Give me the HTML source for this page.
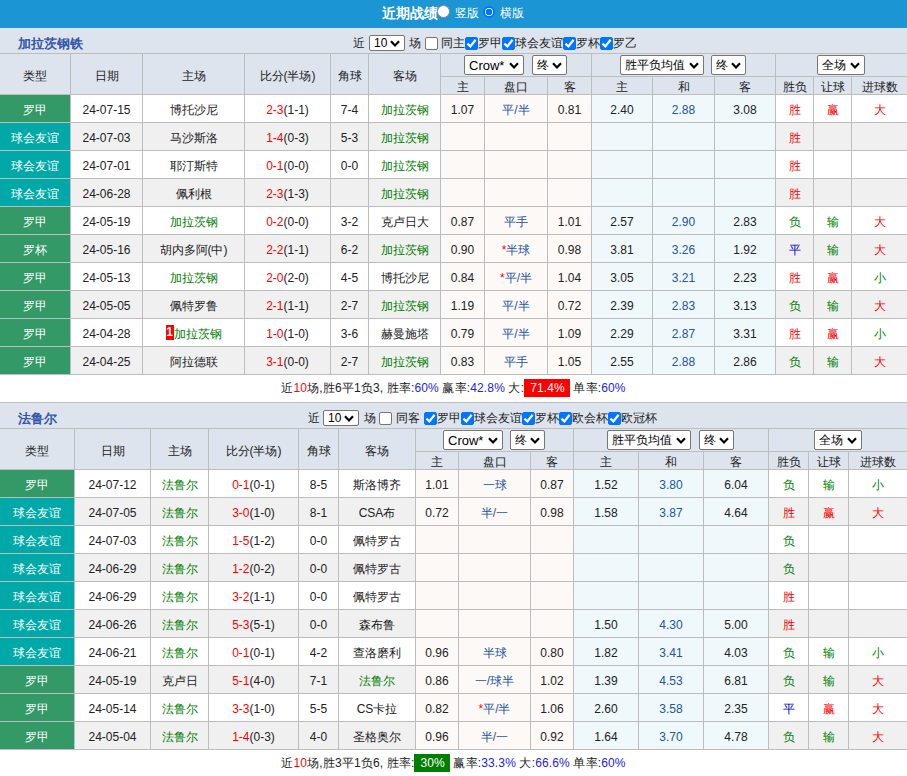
<!DOCTYPE html><html><head><meta charset="utf-8"><style>
*{margin:0;padding:0;box-sizing:border-box}
html,body{width:907px;height:776px;overflow:hidden;background:#fff}
body{position:relative;font-family:"Liberation Sans",sans-serif;font-size:12px;color:#222}
body>div{position:absolute;white-space:nowrap}
.sel{background:#fff;border:1px solid #767676;border-radius:2px;color:#000}
.sel span{position:absolute;left:4px;top:0;bottom:0;display:flex;align-items:center;font-size:13px}
.cb{position:absolute;width:13px;height:13px;border:1px solid #767676;border-radius:2px;background:#fff}
.cb.on{background:#0075ff;border-color:#0075ff}
.cb svg{position:absolute;left:-1px;top:-1px}
.rd{position:absolute;width:13px;height:13px;border-radius:50%;background:#fff;border:1px solid #888}
.rd.on{background:radial-gradient(circle,#0075ff 0,#0075ff 3px,#fff 3.6px);border:2px solid #0075ff;width:12px;height:12px}
.rk{display:inline-block;background:#f00;color:#fff;font-weight:bold;width:8px;height:15px;line-height:15px;text-align:center;vertical-align:2px;font-size:12px}
</style></head><body><div style="left:0px;top:0px;width:907px;height:28px;background:#1b95d3"></div><div style="left:0px;top:28px;width:907px;height:25px;background:#dde4ed"></div><div style="left:18px;top:31px;height:25px;line-height:25px;font-size:13px;font-weight:bold;color:#3456a8">加拉茨钢铁</div><div style="left:353px;top:36px;line-height:15px;height:15px;">近</div><div class="sel" style="left:369px;top:35px;width:36px;height:16px"><span style="font-size:12px;left:4px;font-family:"Liberation Mono",monospace">10</span><svg width="10" height="7" viewBox="0 0 10 7" style="position:absolute;right:4px;top:4px"><path d="M1 1.2 L5 5.4 L9 1.2" stroke="#000" stroke-width="2.2" fill="none"/></svg></div><div style="left:409px;top:36px;line-height:15px;height:15px;">场</div><div class="cb" style="left:425px;top:37px"></div><div style="left:441px;top:36px;line-height:15px;height:15px;">同主</div><div class="cb on" style="left:465px;top:37px"><svg width="13" height="13" viewBox="0 0 13 13"><path d="M2.4 6.6 L5.4 9.4 L10.6 2.8" stroke="#fff" stroke-width="2.2" fill="none"/></svg></div><div style="left:478px;top:36px;line-height:15px;height:15px;">罗甲</div><div class="cb on" style="left:502px;top:37px"><svg width="13" height="13" viewBox="0 0 13 13"><path d="M2.4 6.6 L5.4 9.4 L10.6 2.8" stroke="#fff" stroke-width="2.2" fill="none"/></svg></div><div style="left:515px;top:36px;line-height:15px;height:15px;">球会友谊</div><div class="cb on" style="left:563px;top:37px"><svg width="13" height="13" viewBox="0 0 13 13"><path d="M2.4 6.6 L5.4 9.4 L10.6 2.8" stroke="#fff" stroke-width="2.2" fill="none"/></svg></div><div style="left:576px;top:36px;line-height:15px;height:15px;">罗杯</div><div class="cb on" style="left:600px;top:37px"><svg width="13" height="13" viewBox="0 0 13 13"><path d="M2.4 6.6 L5.4 9.4 L10.6 2.8" stroke="#fff" stroke-width="2.2" fill="none"/></svg></div><div style="left:613px;top:36px;line-height:15px;height:15px;">罗乙</div><div style="left:0px;top:53px;width:907px;height:1px;background:#bdbdbd"></div><div style="left:0px;top:54px;width:907px;height:40px;background:#dde4ed"></div><div style="left:0px;top:94px;width:907px;height:1px;background:#bdbdbd"></div><div style="left:0px;top:54px;width:70px;height:40px;line-height:40px;text-align:center;padding-top:2px;">类型</div><div style="left:71px;top:54px;width:71px;height:40px;line-height:40px;text-align:center;padding-top:2px;">日期</div><div style="left:143px;top:54px;width:101px;height:40px;line-height:40px;text-align:center;padding-top:2px;">主场</div><div style="left:245px;top:54px;width:85px;height:40px;line-height:40px;text-align:center;padding-top:2px;">比分(半场)</div><div style="left:331px;top:54px;width:37px;height:40px;line-height:40px;text-align:center;padding-top:2px;">角球</div><div style="left:369px;top:54px;width:71px;height:40px;line-height:40px;text-align:center;padding-top:2px;">客场</div><div style="left:440px;top:76px;width:467px;height:1px;background:#bdbdbd"></div><div style="left:441px;top:77px;width:43px;height:17px;line-height:17px;text-align:center;padding-top:2px;line-height:17px">主</div><div style="left:485px;top:77px;width:62px;height:17px;line-height:17px;text-align:center;padding-top:2px;line-height:17px">盘口</div><div style="left:548px;top:77px;width:43px;height:17px;line-height:17px;text-align:center;padding-top:2px;line-height:17px">客</div><div style="left:592px;top:77px;width:60px;height:17px;line-height:17px;text-align:center;padding-top:2px;line-height:17px">主</div><div style="left:653px;top:77px;width:61px;height:17px;line-height:17px;text-align:center;padding-top:2px;line-height:17px">和</div><div style="left:715px;top:77px;width:60px;height:17px;line-height:17px;text-align:center;padding-top:2px;line-height:17px">客</div><div style="left:776px;top:77px;width:37px;height:17px;line-height:17px;text-align:center;padding-top:2px;line-height:17px">胜负</div><div style="left:814px;top:77px;width:37px;height:17px;line-height:17px;text-align:center;padding-top:2px;line-height:17px">让球</div><div style="left:852px;top:77px;width:55px;height:17px;line-height:17px;text-align:center;padding-top:2px;line-height:17px">进球数</div><div class="sel" style="left:464px;top:55px;width:60px;height:20px"><span style="font-size:13px;left:4px;">Crow*</span><svg width="10" height="7" viewBox="0 0 10 7" style="position:absolute;right:4px;top:6px"><path d="M1 1.2 L5 5.4 L9 1.2" stroke="#000" stroke-width="2.2" fill="none"/></svg></div><div class="sel" style="left:532px;top:55px;width:35px;height:20px"><span style="font-size:12px;left:4px;">终</span><svg width="10" height="7" viewBox="0 0 10 7" style="position:absolute;right:4px;top:6px"><path d="M1 1.2 L5 5.4 L9 1.2" stroke="#000" stroke-width="2.2" fill="none"/></svg></div><div class="sel" style="left:620px;top:55px;width:84px;height:20px"><span style="font-size:12px;left:4px;">胜平负均值</span><svg width="10" height="7" viewBox="0 0 10 7" style="position:absolute;right:4px;top:6px"><path d="M1 1.2 L5 5.4 L9 1.2" stroke="#000" stroke-width="2.2" fill="none"/></svg></div><div class="sel" style="left:711px;top:55px;width:35px;height:20px"><span style="font-size:12px;left:4px;">终</span><svg width="10" height="7" viewBox="0 0 10 7" style="position:absolute;right:4px;top:6px"><path d="M1 1.2 L5 5.4 L9 1.2" stroke="#000" stroke-width="2.2" fill="none"/></svg></div><div class="sel" style="left:817px;top:55px;width:48px;height:20px"><span style="font-size:12px;left:4px;">全场</span><svg width="10" height="7" viewBox="0 0 10 7" style="position:absolute;right:4px;top:6px"><path d="M1 1.2 L5 5.4 L9 1.2" stroke="#000" stroke-width="2.2" fill="none"/></svg></div><div style="left:0px;top:95px;width:907px;height:27px;background:#fff"></div><div style="left:0px;top:95px;width:70px;height:27px;background:#339966"></div><div style="left:441px;top:95px;width:150px;height:27px;background:#fdf9f6"></div><div style="left:592px;top:95px;width:183px;height:27px;background:#eff8fb"></div><div style="left:0px;top:95px;width:70px;height:27px;line-height:27px;text-align:center;padding-top:2px;color:#fff">罗甲</div><div style="left:71px;top:95px;width:71px;height:27px;line-height:27px;text-align:center;padding-top:2px;">24-07-15</div><div style="left:143px;top:95px;width:101px;height:27px;line-height:27px;text-align:center;padding-top:2px;">博托沙尼</div><div style="left:245px;top:95px;width:85px;height:27px;line-height:27px;text-align:center;padding-top:2px;"><span style="color:#ff0000">2-3</span>(1-1)</div><div style="left:331px;top:95px;width:37px;height:27px;line-height:27px;text-align:center;padding-top:2px;">7-4</div><div style="left:369px;top:95px;width:71px;height:27px;line-height:27px;text-align:center;padding-top:2px;color:#008000">加拉茨钢</div><div style="left:441px;top:95px;width:43px;height:27px;line-height:27px;text-align:center;padding-top:2px;">1.07</div><div style="left:485px;top:95px;width:62px;height:27px;line-height:27px;text-align:center;padding-top:2px;color:#2255a4">平/半</div><div style="left:548px;top:95px;width:43px;height:27px;line-height:27px;text-align:center;padding-top:2px;">0.81</div><div style="left:592px;top:95px;width:60px;height:27px;line-height:27px;text-align:center;padding-top:2px;">2.40</div><div style="left:653px;top:95px;width:61px;height:27px;line-height:27px;text-align:center;padding-top:2px;color:#2255a4">2.88</div><div style="left:715px;top:95px;width:60px;height:27px;line-height:27px;text-align:center;padding-top:2px;">3.08</div><div style="left:776px;top:95px;width:37px;height:27px;line-height:27px;text-align:center;padding-top:2px;color:#ff0000">胜</div><div style="left:814px;top:95px;width:37px;height:27px;line-height:27px;text-align:center;padding-top:2px;color:#ff0000">赢</div><div style="left:852px;top:95px;width:55px;height:27px;line-height:27px;text-align:center;padding-top:2px;color:#ff0000">大</div><div style="left:0px;top:122px;width:907px;height:1px;background:#bdbdbd"></div><div style="left:0px;top:123px;width:907px;height:27px;background:#f0f0f0"></div><div style="left:0px;top:123px;width:70px;height:27px;background:#00a8a8"></div><div style="left:441px;top:123px;width:150px;height:27px;background:#fdf9f6"></div><div style="left:592px;top:123px;width:183px;height:27px;background:#eff8fb"></div><div style="left:0px;top:123px;width:70px;height:27px;line-height:27px;text-align:center;padding-top:2px;color:#fff">球会友谊</div><div style="left:71px;top:123px;width:71px;height:27px;line-height:27px;text-align:center;padding-top:2px;">24-07-03</div><div style="left:143px;top:123px;width:101px;height:27px;line-height:27px;text-align:center;padding-top:2px;">马沙斯洛</div><div style="left:245px;top:123px;width:85px;height:27px;line-height:27px;text-align:center;padding-top:2px;"><span style="color:#ff0000">1-4</span>(0-3)</div><div style="left:331px;top:123px;width:37px;height:27px;line-height:27px;text-align:center;padding-top:2px;">5-3</div><div style="left:369px;top:123px;width:71px;height:27px;line-height:27px;text-align:center;padding-top:2px;color:#008000">加拉茨钢</div><div style="left:776px;top:123px;width:37px;height:27px;line-height:27px;text-align:center;padding-top:2px;color:#ff0000">胜</div><div style="left:0px;top:150px;width:907px;height:1px;background:#bdbdbd"></div><div style="left:0px;top:151px;width:907px;height:27px;background:#fff"></div><div style="left:0px;top:151px;width:70px;height:27px;background:#00a8a8"></div><div style="left:441px;top:151px;width:150px;height:27px;background:#fdf9f6"></div><div style="left:592px;top:151px;width:183px;height:27px;background:#eff8fb"></div><div style="left:0px;top:151px;width:70px;height:27px;line-height:27px;text-align:center;padding-top:2px;color:#fff">球会友谊</div><div style="left:71px;top:151px;width:71px;height:27px;line-height:27px;text-align:center;padding-top:2px;">24-07-01</div><div style="left:143px;top:151px;width:101px;height:27px;line-height:27px;text-align:center;padding-top:2px;">耶汀斯特</div><div style="left:245px;top:151px;width:85px;height:27px;line-height:27px;text-align:center;padding-top:2px;"><span style="color:#ff0000">0-1</span>(0-0)</div><div style="left:331px;top:151px;width:37px;height:27px;line-height:27px;text-align:center;padding-top:2px;">0-0</div><div style="left:369px;top:151px;width:71px;height:27px;line-height:27px;text-align:center;padding-top:2px;color:#008000">加拉茨钢</div><div style="left:776px;top:151px;width:37px;height:27px;line-height:27px;text-align:center;padding-top:2px;color:#ff0000">胜</div><div style="left:0px;top:178px;width:907px;height:1px;background:#bdbdbd"></div><div style="left:0px;top:179px;width:907px;height:27px;background:#f0f0f0"></div><div style="left:0px;top:179px;width:70px;height:27px;background:#00a8a8"></div><div style="left:441px;top:179px;width:150px;height:27px;background:#fdf9f6"></div><div style="left:592px;top:179px;width:183px;height:27px;background:#eff8fb"></div><div style="left:0px;top:179px;width:70px;height:27px;line-height:27px;text-align:center;padding-top:2px;color:#fff">球会友谊</div><div style="left:71px;top:179px;width:71px;height:27px;line-height:27px;text-align:center;padding-top:2px;">24-06-28</div><div style="left:143px;top:179px;width:101px;height:27px;line-height:27px;text-align:center;padding-top:2px;">佩利根</div><div style="left:245px;top:179px;width:85px;height:27px;line-height:27px;text-align:center;padding-top:2px;"><span style="color:#ff0000">2-3</span>(1-3)</div><div style="left:369px;top:179px;width:71px;height:27px;line-height:27px;text-align:center;padding-top:2px;color:#008000">加拉茨钢</div><div style="left:776px;top:179px;width:37px;height:27px;line-height:27px;text-align:center;padding-top:2px;color:#ff0000">胜</div><div style="left:0px;top:206px;width:907px;height:1px;background:#bdbdbd"></div><div style="left:0px;top:207px;width:907px;height:27px;background:#fff"></div><div style="left:0px;top:207px;width:70px;height:27px;background:#339966"></div><div style="left:441px;top:207px;width:150px;height:27px;background:#fdf9f6"></div><div style="left:592px;top:207px;width:183px;height:27px;background:#eff8fb"></div><div style="left:0px;top:207px;width:70px;height:27px;line-height:27px;text-align:center;padding-top:2px;color:#fff">罗甲</div><div style="left:71px;top:207px;width:71px;height:27px;line-height:27px;text-align:center;padding-top:2px;">24-05-19</div><div style="left:143px;top:207px;width:101px;height:27px;line-height:27px;text-align:center;padding-top:2px;color:#008000">加拉茨钢</div><div style="left:245px;top:207px;width:85px;height:27px;line-height:27px;text-align:center;padding-top:2px;"><span style="color:#ff0000">0-2</span>(0-0)</div><div style="left:331px;top:207px;width:37px;height:27px;line-height:27px;text-align:center;padding-top:2px;">3-2</div><div style="left:369px;top:207px;width:71px;height:27px;line-height:27px;text-align:center;padding-top:2px;">克卢日大</div><div style="left:441px;top:207px;width:43px;height:27px;line-height:27px;text-align:center;padding-top:2px;">0.87</div><div style="left:485px;top:207px;width:62px;height:27px;line-height:27px;text-align:center;padding-top:2px;color:#2255a4">平手</div><div style="left:548px;top:207px;width:43px;height:27px;line-height:27px;text-align:center;padding-top:2px;">1.01</div><div style="left:592px;top:207px;width:60px;height:27px;line-height:27px;text-align:center;padding-top:2px;">2.57</div><div style="left:653px;top:207px;width:61px;height:27px;line-height:27px;text-align:center;padding-top:2px;color:#2255a4">2.90</div><div style="left:715px;top:207px;width:60px;height:27px;line-height:27px;text-align:center;padding-top:2px;">2.83</div><div style="left:776px;top:207px;width:37px;height:27px;line-height:27px;text-align:center;padding-top:2px;color:#008000">负</div><div style="left:814px;top:207px;width:37px;height:27px;line-height:27px;text-align:center;padding-top:2px;color:#008000">输</div><div style="left:852px;top:207px;width:55px;height:27px;line-height:27px;text-align:center;padding-top:2px;color:#ff0000">大</div><div style="left:0px;top:234px;width:907px;height:1px;background:#bdbdbd"></div><div style="left:0px;top:235px;width:907px;height:27px;background:#f0f0f0"></div><div style="left:0px;top:235px;width:70px;height:27px;background:#339966"></div><div style="left:441px;top:235px;width:150px;height:27px;background:#fdf9f6"></div><div style="left:592px;top:235px;width:183px;height:27px;background:#eff8fb"></div><div style="left:0px;top:235px;width:70px;height:27px;line-height:27px;text-align:center;padding-top:2px;color:#fff">罗杯</div><div style="left:71px;top:235px;width:71px;height:27px;line-height:27px;text-align:center;padding-top:2px;">24-05-16</div><div style="left:143px;top:235px;width:101px;height:27px;line-height:27px;text-align:center;padding-top:2px;">胡内多阿(中)</div><div style="left:245px;top:235px;width:85px;height:27px;line-height:27px;text-align:center;padding-top:2px;"><span style="color:#ff0000">2-2</span>(1-1)</div><div style="left:331px;top:235px;width:37px;height:27px;line-height:27px;text-align:center;padding-top:2px;">6-2</div><div style="left:369px;top:235px;width:71px;height:27px;line-height:27px;text-align:center;padding-top:2px;color:#008000">加拉茨钢</div><div style="left:441px;top:235px;width:43px;height:27px;line-height:27px;text-align:center;padding-top:2px;">0.90</div><div style="left:485px;top:235px;width:62px;height:27px;line-height:27px;text-align:center;padding-top:2px;color:#2255a4"><span style="color:#ff0000">*</span>半球</div><div style="left:548px;top:235px;width:43px;height:27px;line-height:27px;text-align:center;padding-top:2px;">0.98</div><div style="left:592px;top:235px;width:60px;height:27px;line-height:27px;text-align:center;padding-top:2px;">3.81</div><div style="left:653px;top:235px;width:61px;height:27px;line-height:27px;text-align:center;padding-top:2px;color:#2255a4">3.26</div><div style="left:715px;top:235px;width:60px;height:27px;line-height:27px;text-align:center;padding-top:2px;">1.92</div><div style="left:776px;top:235px;width:37px;height:27px;line-height:27px;text-align:center;padding-top:2px;color:#0000cc">平</div><div style="left:814px;top:235px;width:37px;height:27px;line-height:27px;text-align:center;padding-top:2px;color:#008000">输</div><div style="left:852px;top:235px;width:55px;height:27px;line-height:27px;text-align:center;padding-top:2px;color:#ff0000">大</div><div style="left:0px;top:262px;width:907px;height:1px;background:#bdbdbd"></div><div style="left:0px;top:263px;width:907px;height:27px;background:#fff"></div><div style="left:0px;top:263px;width:70px;height:27px;background:#339966"></div><div style="left:441px;top:263px;width:150px;height:27px;background:#fdf9f6"></div><div style="left:592px;top:263px;width:183px;height:27px;background:#eff8fb"></div><div style="left:0px;top:263px;width:70px;height:27px;line-height:27px;text-align:center;padding-top:2px;color:#fff">罗甲</div><div style="left:71px;top:263px;width:71px;height:27px;line-height:27px;text-align:center;padding-top:2px;">24-05-13</div><div style="left:143px;top:263px;width:101px;height:27px;line-height:27px;text-align:center;padding-top:2px;color:#008000">加拉茨钢</div><div style="left:245px;top:263px;width:85px;height:27px;line-height:27px;text-align:center;padding-top:2px;"><span style="color:#ff0000">2-0</span>(2-0)</div><div style="left:331px;top:263px;width:37px;height:27px;line-height:27px;text-align:center;padding-top:2px;">4-5</div><div style="left:369px;top:263px;width:71px;height:27px;line-height:27px;text-align:center;padding-top:2px;">博托沙尼</div><div style="left:441px;top:263px;width:43px;height:27px;line-height:27px;text-align:center;padding-top:2px;">0.84</div><div style="left:485px;top:263px;width:62px;height:27px;line-height:27px;text-align:center;padding-top:2px;color:#2255a4"><span style="color:#ff0000">*</span>平/半</div><div style="left:548px;top:263px;width:43px;height:27px;line-height:27px;text-align:center;padding-top:2px;">1.04</div><div style="left:592px;top:263px;width:60px;height:27px;line-height:27px;text-align:center;padding-top:2px;">3.05</div><div style="left:653px;top:263px;width:61px;height:27px;line-height:27px;text-align:center;padding-top:2px;color:#2255a4">3.21</div><div style="left:715px;top:263px;width:60px;height:27px;line-height:27px;text-align:center;padding-top:2px;">2.23</div><div style="left:776px;top:263px;width:37px;height:27px;line-height:27px;text-align:center;padding-top:2px;color:#ff0000">胜</div><div style="left:814px;top:263px;width:37px;height:27px;line-height:27px;text-align:center;padding-top:2px;color:#ff0000">赢</div><div style="left:852px;top:263px;width:55px;height:27px;line-height:27px;text-align:center;padding-top:2px;color:#008000">小</div><div style="left:0px;top:290px;width:907px;height:1px;background:#bdbdbd"></div><div style="left:0px;top:291px;width:907px;height:27px;background:#f0f0f0"></div><div style="left:0px;top:291px;width:70px;height:27px;background:#339966"></div><div style="left:441px;top:291px;width:150px;height:27px;background:#fdf9f6"></div><div style="left:592px;top:291px;width:183px;height:27px;background:#eff8fb"></div><div style="left:0px;top:291px;width:70px;height:27px;line-height:27px;text-align:center;padding-top:2px;color:#fff">罗甲</div><div style="left:71px;top:291px;width:71px;height:27px;line-height:27px;text-align:center;padding-top:2px;">24-05-05</div><div style="left:143px;top:291px;width:101px;height:27px;line-height:27px;text-align:center;padding-top:2px;">佩特罗鲁</div><div style="left:245px;top:291px;width:85px;height:27px;line-height:27px;text-align:center;padding-top:2px;"><span style="color:#ff0000">2-1</span>(1-1)</div><div style="left:331px;top:291px;width:37px;height:27px;line-height:27px;text-align:center;padding-top:2px;">2-7</div><div style="left:369px;top:291px;width:71px;height:27px;line-height:27px;text-align:center;padding-top:2px;color:#008000">加拉茨钢</div><div style="left:441px;top:291px;width:43px;height:27px;line-height:27px;text-align:center;padding-top:2px;">1.19</div><div style="left:485px;top:291px;width:62px;height:27px;line-height:27px;text-align:center;padding-top:2px;color:#2255a4">平/半</div><div style="left:548px;top:291px;width:43px;height:27px;line-height:27px;text-align:center;padding-top:2px;">0.72</div><div style="left:592px;top:291px;width:60px;height:27px;line-height:27px;text-align:center;padding-top:2px;">2.39</div><div style="left:653px;top:291px;width:61px;height:27px;line-height:27px;text-align:center;padding-top:2px;color:#2255a4">2.83</div><div style="left:715px;top:291px;width:60px;height:27px;line-height:27px;text-align:center;padding-top:2px;">3.13</div><div style="left:776px;top:291px;width:37px;height:27px;line-height:27px;text-align:center;padding-top:2px;color:#008000">负</div><div style="left:814px;top:291px;width:37px;height:27px;line-height:27px;text-align:center;padding-top:2px;color:#008000">输</div><div style="left:852px;top:291px;width:55px;height:27px;line-height:27px;text-align:center;padding-top:2px;color:#ff0000">大</div><div style="left:0px;top:318px;width:907px;height:1px;background:#bdbdbd"></div><div style="left:0px;top:319px;width:907px;height:27px;background:#fff"></div><div style="left:0px;top:319px;width:70px;height:27px;background:#339966"></div><div style="left:441px;top:319px;width:150px;height:27px;background:#fdf9f6"></div><div style="left:592px;top:319px;width:183px;height:27px;background:#eff8fb"></div><div style="left:0px;top:319px;width:70px;height:27px;line-height:27px;text-align:center;padding-top:2px;color:#fff">罗甲</div><div style="left:71px;top:319px;width:71px;height:27px;line-height:27px;text-align:center;padding-top:2px;">24-04-28</div><div style="left:143px;top:319px;width:101px;height:27px;line-height:27px;text-align:center;padding-top:2px;color:#008000"><span class="rk">1</span>加拉茨钢</div><div style="left:245px;top:319px;width:85px;height:27px;line-height:27px;text-align:center;padding-top:2px;"><span style="color:#ff0000">1-0</span>(1-0)</div><div style="left:331px;top:319px;width:37px;height:27px;line-height:27px;text-align:center;padding-top:2px;">3-6</div><div style="left:369px;top:319px;width:71px;height:27px;line-height:27px;text-align:center;padding-top:2px;">赫曼施塔</div><div style="left:441px;top:319px;width:43px;height:27px;line-height:27px;text-align:center;padding-top:2px;">0.79</div><div style="left:485px;top:319px;width:62px;height:27px;line-height:27px;text-align:center;padding-top:2px;color:#2255a4">平/半</div><div style="left:548px;top:319px;width:43px;height:27px;line-height:27px;text-align:center;padding-top:2px;">1.09</div><div style="left:592px;top:319px;width:60px;height:27px;line-height:27px;text-align:center;padding-top:2px;">2.29</div><div style="left:653px;top:319px;width:61px;height:27px;line-height:27px;text-align:center;padding-top:2px;color:#2255a4">2.87</div><div style="left:715px;top:319px;width:60px;height:27px;line-height:27px;text-align:center;padding-top:2px;">3.31</div><div style="left:776px;top:319px;width:37px;height:27px;line-height:27px;text-align:center;padding-top:2px;color:#ff0000">胜</div><div style="left:814px;top:319px;width:37px;height:27px;line-height:27px;text-align:center;padding-top:2px;color:#ff0000">赢</div><div style="left:852px;top:319px;width:55px;height:27px;line-height:27px;text-align:center;padding-top:2px;color:#008000">小</div><div style="left:0px;top:346px;width:907px;height:1px;background:#bdbdbd"></div><div style="left:0px;top:347px;width:907px;height:27px;background:#f0f0f0"></div><div style="left:0px;top:347px;width:70px;height:27px;background:#339966"></div><div style="left:441px;top:347px;width:150px;height:27px;background:#fdf9f6"></div><div style="left:592px;top:347px;width:183px;height:27px;background:#eff8fb"></div><div style="left:0px;top:347px;width:70px;height:27px;line-height:27px;text-align:center;padding-top:2px;color:#fff">罗甲</div><div style="left:71px;top:347px;width:71px;height:27px;line-height:27px;text-align:center;padding-top:2px;">24-04-25</div><div style="left:143px;top:347px;width:101px;height:27px;line-height:27px;text-align:center;padding-top:2px;">阿拉德联</div><div style="left:245px;top:347px;width:85px;height:27px;line-height:27px;text-align:center;padding-top:2px;"><span style="color:#ff0000">3-1</span>(0-0)</div><div style="left:331px;top:347px;width:37px;height:27px;line-height:27px;text-align:center;padding-top:2px;">2-7</div><div style="left:369px;top:347px;width:71px;height:27px;line-height:27px;text-align:center;padding-top:2px;color:#008000">加拉茨钢</div><div style="left:441px;top:347px;width:43px;height:27px;line-height:27px;text-align:center;padding-top:2px;">0.83</div><div style="left:485px;top:347px;width:62px;height:27px;line-height:27px;text-align:center;padding-top:2px;color:#2255a4">平手</div><div style="left:548px;top:347px;width:43px;height:27px;line-height:27px;text-align:center;padding-top:2px;">1.05</div><div style="left:592px;top:347px;width:60px;height:27px;line-height:27px;text-align:center;padding-top:2px;">2.55</div><div style="left:653px;top:347px;width:61px;height:27px;line-height:27px;text-align:center;padding-top:2px;color:#2255a4">2.88</div><div style="left:715px;top:347px;width:60px;height:27px;line-height:27px;text-align:center;padding-top:2px;">2.86</div><div style="left:776px;top:347px;width:37px;height:27px;line-height:27px;text-align:center;padding-top:2px;color:#008000">负</div><div style="left:814px;top:347px;width:37px;height:27px;line-height:27px;text-align:center;padding-top:2px;color:#008000">输</div><div style="left:852px;top:347px;width:55px;height:27px;line-height:27px;text-align:center;padding-top:2px;color:#ff0000">大</div><div style="left:0px;top:374px;width:907px;height:1px;background:#bdbdbd"></div><div style="left:70px;top:54px;width:1px;height:321px;background:#bdbdbd"></div><div style="left:142px;top:54px;width:1px;height:321px;background:#bdbdbd"></div><div style="left:244px;top:54px;width:1px;height:321px;background:#bdbdbd"></div><div style="left:330px;top:54px;width:1px;height:321px;background:#bdbdbd"></div><div style="left:368px;top:54px;width:1px;height:321px;background:#bdbdbd"></div><div style="left:440px;top:54px;width:1px;height:321px;background:#bdbdbd"></div><div style="left:484px;top:76px;width:1px;height:299px;background:#bdbdbd"></div><div style="left:547px;top:76px;width:1px;height:299px;background:#bdbdbd"></div><div style="left:591px;top:54px;width:1px;height:321px;background:#bdbdbd"></div><div style="left:652px;top:76px;width:1px;height:299px;background:#bdbdbd"></div><div style="left:714px;top:76px;width:1px;height:299px;background:#bdbdbd"></div><div style="left:775px;top:54px;width:1px;height:321px;background:#bdbdbd"></div><div style="left:813px;top:76px;width:1px;height:299px;background:#bdbdbd"></div><div style="left:851px;top:76px;width:1px;height:299px;background:#bdbdbd"></div><div style="left:0;top:375px;width:907px;height:27px;line-height:27px;text-align:center;background:#fff"><span style="letter-spacing:0.15px">近<span style="color:#ff0000">10</span>场,胜6平1负3, 胜率:<span style="color:#2222ee">60%</span> 赢率:<span style="color:#2222ee">42.8%</span> 大:<span style="background:#ff0000;color:#fff;padding:2px 5px 2px 6px">71.4%</span> 单率:<span style="color:#2222ee">60%</span></span></div><div style="left:0px;top:402px;width:907px;height:1px;background:#bdbdbd"></div><div style="left:0px;top:403px;width:907px;height:25px;background:#dde4ed"></div><div style="left:18px;top:406px;height:25px;line-height:25px;font-size:13px;font-weight:bold;color:#3456a8">法鲁尔</div><div style="left:308px;top:411px;line-height:15px;height:15px;">近</div><div class="sel" style="left:323px;top:410px;width:36px;height:16px"><span style="font-size:12px;left:4px;font-family:"Liberation Mono",monospace">10</span><svg width="10" height="7" viewBox="0 0 10 7" style="position:absolute;right:4px;top:4px"><path d="M1 1.2 L5 5.4 L9 1.2" stroke="#000" stroke-width="2.2" fill="none"/></svg></div><div style="left:364px;top:411px;line-height:15px;height:15px;">场</div><div class="cb" style="left:379px;top:412px"></div><div style="left:396px;top:411px;line-height:15px;height:15px;">同客</div><div class="cb on" style="left:424px;top:412px"><svg width="13" height="13" viewBox="0 0 13 13"><path d="M2.4 6.6 L5.4 9.4 L10.6 2.8" stroke="#fff" stroke-width="2.2" fill="none"/></svg></div><div style="left:437px;top:411px;line-height:15px;height:15px;">罗甲</div><div class="cb on" style="left:461px;top:412px"><svg width="13" height="13" viewBox="0 0 13 13"><path d="M2.4 6.6 L5.4 9.4 L10.6 2.8" stroke="#fff" stroke-width="2.2" fill="none"/></svg></div><div style="left:474px;top:411px;line-height:15px;height:15px;">球会友谊</div><div class="cb on" style="left:522px;top:412px"><svg width="13" height="13" viewBox="0 0 13 13"><path d="M2.4 6.6 L5.4 9.4 L10.6 2.8" stroke="#fff" stroke-width="2.2" fill="none"/></svg></div><div style="left:535px;top:411px;line-height:15px;height:15px;">罗杯</div><div class="cb on" style="left:559px;top:412px"><svg width="13" height="13" viewBox="0 0 13 13"><path d="M2.4 6.6 L5.4 9.4 L10.6 2.8" stroke="#fff" stroke-width="2.2" fill="none"/></svg></div><div style="left:572px;top:411px;line-height:15px;height:15px;">欧会杯</div><div class="cb on" style="left:608px;top:412px"><svg width="13" height="13" viewBox="0 0 13 13"><path d="M2.4 6.6 L5.4 9.4 L10.6 2.8" stroke="#fff" stroke-width="2.2" fill="none"/></svg></div><div style="left:621px;top:411px;line-height:15px;height:15px;">欧冠杯</div><div style="left:0px;top:428px;width:907px;height:1px;background:#bdbdbd"></div><div style="left:0px;top:429px;width:907px;height:40px;background:#dde4ed"></div><div style="left:0px;top:469px;width:907px;height:1px;background:#bdbdbd"></div><div style="left:0px;top:429px;width:74px;height:40px;line-height:40px;text-align:center;padding-top:2px;">类型</div><div style="left:75px;top:429px;width:75px;height:40px;line-height:40px;text-align:center;padding-top:2px;">日期</div><div style="left:151px;top:429px;width:57px;height:40px;line-height:40px;text-align:center;padding-top:2px;">主场</div><div style="left:209px;top:429px;width:89px;height:40px;line-height:40px;text-align:center;padding-top:2px;">比分(半场)</div><div style="left:299px;top:429px;width:39px;height:40px;line-height:40px;text-align:center;padding-top:2px;">角球</div><div style="left:339px;top:429px;width:76px;height:40px;line-height:40px;text-align:center;padding-top:2px;">客场</div><div style="left:415px;top:451px;width:492px;height:1px;background:#bdbdbd"></div><div style="left:416px;top:452px;width:42px;height:17px;line-height:17px;text-align:center;padding-top:2px;line-height:17px">主</div><div style="left:459px;top:452px;width:71px;height:17px;line-height:17px;text-align:center;padding-top:2px;line-height:17px">盘口</div><div style="left:531px;top:452px;width:42px;height:17px;line-height:17px;text-align:center;padding-top:2px;line-height:17px">客</div><div style="left:574px;top:452px;width:64px;height:17px;line-height:17px;text-align:center;padding-top:2px;line-height:17px">主</div><div style="left:639px;top:452px;width:64px;height:17px;line-height:17px;text-align:center;padding-top:2px;line-height:17px">和</div><div style="left:704px;top:452px;width:64px;height:17px;line-height:17px;text-align:center;padding-top:2px;line-height:17px">客</div><div style="left:769px;top:452px;width:39px;height:17px;line-height:17px;text-align:center;padding-top:2px;line-height:17px">胜负</div><div style="left:809px;top:452px;width:39px;height:17px;line-height:17px;text-align:center;padding-top:2px;line-height:17px">让球</div><div style="left:849px;top:452px;width:58px;height:17px;line-height:17px;text-align:center;padding-top:2px;line-height:17px">进球数</div><div class="sel" style="left:443px;top:430px;width:60px;height:20px"><span style="font-size:13px;left:4px;">Crow*</span><svg width="10" height="7" viewBox="0 0 10 7" style="position:absolute;right:4px;top:6px"><path d="M1 1.2 L5 5.4 L9 1.2" stroke="#000" stroke-width="2.2" fill="none"/></svg></div><div class="sel" style="left:510px;top:430px;width:35px;height:20px"><span style="font-size:12px;left:4px;">终</span><svg width="10" height="7" viewBox="0 0 10 7" style="position:absolute;right:4px;top:6px"><path d="M1 1.2 L5 5.4 L9 1.2" stroke="#000" stroke-width="2.2" fill="none"/></svg></div><div class="sel" style="left:607px;top:430px;width:84px;height:20px"><span style="font-size:12px;left:4px;">胜平负均值</span><svg width="10" height="7" viewBox="0 0 10 7" style="position:absolute;right:4px;top:6px"><path d="M1 1.2 L5 5.4 L9 1.2" stroke="#000" stroke-width="2.2" fill="none"/></svg></div><div class="sel" style="left:699px;top:430px;width:35px;height:20px"><span style="font-size:12px;left:4px;">终</span><svg width="10" height="7" viewBox="0 0 10 7" style="position:absolute;right:4px;top:6px"><path d="M1 1.2 L5 5.4 L9 1.2" stroke="#000" stroke-width="2.2" fill="none"/></svg></div><div class="sel" style="left:814px;top:430px;width:48px;height:20px"><span style="font-size:12px;left:4px;">全场</span><svg width="10" height="7" viewBox="0 0 10 7" style="position:absolute;right:4px;top:6px"><path d="M1 1.2 L5 5.4 L9 1.2" stroke="#000" stroke-width="2.2" fill="none"/></svg></div><div style="left:0px;top:470px;width:907px;height:27px;background:#fff"></div><div style="left:0px;top:470px;width:74px;height:27px;background:#339966"></div><div style="left:416px;top:470px;width:157px;height:27px;background:#fdf9f6"></div><div style="left:574px;top:470px;width:194px;height:27px;background:#eff8fb"></div><div style="left:0px;top:470px;width:74px;height:27px;line-height:27px;text-align:center;padding-top:2px;color:#fff">罗甲</div><div style="left:75px;top:470px;width:75px;height:27px;line-height:27px;text-align:center;padding-top:2px;">24-07-12</div><div style="left:151px;top:470px;width:57px;height:27px;line-height:27px;text-align:center;padding-top:2px;color:#008000">法鲁尔</div><div style="left:209px;top:470px;width:89px;height:27px;line-height:27px;text-align:center;padding-top:2px;"><span style="color:#ff0000">0-1</span>(0-1)</div><div style="left:299px;top:470px;width:39px;height:27px;line-height:27px;text-align:center;padding-top:2px;">8-5</div><div style="left:339px;top:470px;width:76px;height:27px;line-height:27px;text-align:center;padding-top:2px;">斯洛博齐</div><div style="left:416px;top:470px;width:42px;height:27px;line-height:27px;text-align:center;padding-top:2px;">1.01</div><div style="left:459px;top:470px;width:71px;height:27px;line-height:27px;text-align:center;padding-top:2px;color:#2255a4">一球</div><div style="left:531px;top:470px;width:42px;height:27px;line-height:27px;text-align:center;padding-top:2px;">0.87</div><div style="left:574px;top:470px;width:64px;height:27px;line-height:27px;text-align:center;padding-top:2px;">1.52</div><div style="left:639px;top:470px;width:64px;height:27px;line-height:27px;text-align:center;padding-top:2px;color:#2255a4">3.80</div><div style="left:704px;top:470px;width:64px;height:27px;line-height:27px;text-align:center;padding-top:2px;">6.04</div><div style="left:769px;top:470px;width:39px;height:27px;line-height:27px;text-align:center;padding-top:2px;color:#008000">负</div><div style="left:809px;top:470px;width:39px;height:27px;line-height:27px;text-align:center;padding-top:2px;color:#008000">输</div><div style="left:849px;top:470px;width:58px;height:27px;line-height:27px;text-align:center;padding-top:2px;color:#008000">小</div><div style="left:0px;top:497px;width:907px;height:1px;background:#bdbdbd"></div><div style="left:0px;top:498px;width:907px;height:27px;background:#f0f0f0"></div><div style="left:0px;top:498px;width:74px;height:27px;background:#00a8a8"></div><div style="left:416px;top:498px;width:157px;height:27px;background:#fdf9f6"></div><div style="left:574px;top:498px;width:194px;height:27px;background:#eff8fb"></div><div style="left:0px;top:498px;width:74px;height:27px;line-height:27px;text-align:center;padding-top:2px;color:#fff">球会友谊</div><div style="left:75px;top:498px;width:75px;height:27px;line-height:27px;text-align:center;padding-top:2px;">24-07-05</div><div style="left:151px;top:498px;width:57px;height:27px;line-height:27px;text-align:center;padding-top:2px;color:#008000">法鲁尔</div><div style="left:209px;top:498px;width:89px;height:27px;line-height:27px;text-align:center;padding-top:2px;"><span style="color:#ff0000">3-0</span>(1-0)</div><div style="left:299px;top:498px;width:39px;height:27px;line-height:27px;text-align:center;padding-top:2px;">8-1</div><div style="left:339px;top:498px;width:76px;height:27px;line-height:27px;text-align:center;padding-top:2px;">CSA布</div><div style="left:416px;top:498px;width:42px;height:27px;line-height:27px;text-align:center;padding-top:2px;">0.72</div><div style="left:459px;top:498px;width:71px;height:27px;line-height:27px;text-align:center;padding-top:2px;color:#2255a4">半/一</div><div style="left:531px;top:498px;width:42px;height:27px;line-height:27px;text-align:center;padding-top:2px;">0.98</div><div style="left:574px;top:498px;width:64px;height:27px;line-height:27px;text-align:center;padding-top:2px;">1.58</div><div style="left:639px;top:498px;width:64px;height:27px;line-height:27px;text-align:center;padding-top:2px;color:#2255a4">3.87</div><div style="left:704px;top:498px;width:64px;height:27px;line-height:27px;text-align:center;padding-top:2px;">4.64</div><div style="left:769px;top:498px;width:39px;height:27px;line-height:27px;text-align:center;padding-top:2px;color:#ff0000">胜</div><div style="left:809px;top:498px;width:39px;height:27px;line-height:27px;text-align:center;padding-top:2px;color:#ff0000">赢</div><div style="left:849px;top:498px;width:58px;height:27px;line-height:27px;text-align:center;padding-top:2px;color:#ff0000">大</div><div style="left:0px;top:525px;width:907px;height:1px;background:#bdbdbd"></div><div style="left:0px;top:526px;width:907px;height:27px;background:#fff"></div><div style="left:0px;top:526px;width:74px;height:27px;background:#00a8a8"></div><div style="left:416px;top:526px;width:157px;height:27px;background:#fdf9f6"></div><div style="left:574px;top:526px;width:194px;height:27px;background:#eff8fb"></div><div style="left:0px;top:526px;width:74px;height:27px;line-height:27px;text-align:center;padding-top:2px;color:#fff">球会友谊</div><div style="left:75px;top:526px;width:75px;height:27px;line-height:27px;text-align:center;padding-top:2px;">24-07-03</div><div style="left:151px;top:526px;width:57px;height:27px;line-height:27px;text-align:center;padding-top:2px;color:#008000">法鲁尔</div><div style="left:209px;top:526px;width:89px;height:27px;line-height:27px;text-align:center;padding-top:2px;"><span style="color:#ff0000">1-5</span>(1-2)</div><div style="left:299px;top:526px;width:39px;height:27px;line-height:27px;text-align:center;padding-top:2px;">0-0</div><div style="left:339px;top:526px;width:76px;height:27px;line-height:27px;text-align:center;padding-top:2px;">佩特罗古</div><div style="left:769px;top:526px;width:39px;height:27px;line-height:27px;text-align:center;padding-top:2px;color:#008000">负</div><div style="left:0px;top:553px;width:907px;height:1px;background:#bdbdbd"></div><div style="left:0px;top:554px;width:907px;height:27px;background:#f0f0f0"></div><div style="left:0px;top:554px;width:74px;height:27px;background:#00a8a8"></div><div style="left:416px;top:554px;width:157px;height:27px;background:#fdf9f6"></div><div style="left:574px;top:554px;width:194px;height:27px;background:#eff8fb"></div><div style="left:0px;top:554px;width:74px;height:27px;line-height:27px;text-align:center;padding-top:2px;color:#fff">球会友谊</div><div style="left:75px;top:554px;width:75px;height:27px;line-height:27px;text-align:center;padding-top:2px;">24-06-29</div><div style="left:151px;top:554px;width:57px;height:27px;line-height:27px;text-align:center;padding-top:2px;color:#008000">法鲁尔</div><div style="left:209px;top:554px;width:89px;height:27px;line-height:27px;text-align:center;padding-top:2px;"><span style="color:#ff0000">1-2</span>(0-2)</div><div style="left:299px;top:554px;width:39px;height:27px;line-height:27px;text-align:center;padding-top:2px;">0-0</div><div style="left:339px;top:554px;width:76px;height:27px;line-height:27px;text-align:center;padding-top:2px;">佩特罗古</div><div style="left:769px;top:554px;width:39px;height:27px;line-height:27px;text-align:center;padding-top:2px;color:#008000">负</div><div style="left:0px;top:581px;width:907px;height:1px;background:#bdbdbd"></div><div style="left:0px;top:582px;width:907px;height:27px;background:#fff"></div><div style="left:0px;top:582px;width:74px;height:27px;background:#00a8a8"></div><div style="left:416px;top:582px;width:157px;height:27px;background:#fdf9f6"></div><div style="left:574px;top:582px;width:194px;height:27px;background:#eff8fb"></div><div style="left:0px;top:582px;width:74px;height:27px;line-height:27px;text-align:center;padding-top:2px;color:#fff">球会友谊</div><div style="left:75px;top:582px;width:75px;height:27px;line-height:27px;text-align:center;padding-top:2px;">24-06-29</div><div style="left:151px;top:582px;width:57px;height:27px;line-height:27px;text-align:center;padding-top:2px;color:#008000">法鲁尔</div><div style="left:209px;top:582px;width:89px;height:27px;line-height:27px;text-align:center;padding-top:2px;"><span style="color:#ff0000">3-2</span>(1-1)</div><div style="left:299px;top:582px;width:39px;height:27px;line-height:27px;text-align:center;padding-top:2px;">0-0</div><div style="left:339px;top:582px;width:76px;height:27px;line-height:27px;text-align:center;padding-top:2px;">佩特罗古</div><div style="left:769px;top:582px;width:39px;height:27px;line-height:27px;text-align:center;padding-top:2px;color:#ff0000">胜</div><div style="left:0px;top:609px;width:907px;height:1px;background:#bdbdbd"></div><div style="left:0px;top:610px;width:907px;height:27px;background:#f0f0f0"></div><div style="left:0px;top:610px;width:74px;height:27px;background:#00a8a8"></div><div style="left:416px;top:610px;width:157px;height:27px;background:#fdf9f6"></div><div style="left:574px;top:610px;width:194px;height:27px;background:#eff8fb"></div><div style="left:0px;top:610px;width:74px;height:27px;line-height:27px;text-align:center;padding-top:2px;color:#fff">球会友谊</div><div style="left:75px;top:610px;width:75px;height:27px;line-height:27px;text-align:center;padding-top:2px;">24-06-26</div><div style="left:151px;top:610px;width:57px;height:27px;line-height:27px;text-align:center;padding-top:2px;color:#008000">法鲁尔</div><div style="left:209px;top:610px;width:89px;height:27px;line-height:27px;text-align:center;padding-top:2px;"><span style="color:#ff0000">5-3</span>(5-1)</div><div style="left:299px;top:610px;width:39px;height:27px;line-height:27px;text-align:center;padding-top:2px;">0-0</div><div style="left:339px;top:610px;width:76px;height:27px;line-height:27px;text-align:center;padding-top:2px;">森布鲁</div><div style="left:574px;top:610px;width:64px;height:27px;line-height:27px;text-align:center;padding-top:2px;">1.50</div><div style="left:639px;top:610px;width:64px;height:27px;line-height:27px;text-align:center;padding-top:2px;color:#2255a4">4.30</div><div style="left:704px;top:610px;width:64px;height:27px;line-height:27px;text-align:center;padding-top:2px;">5.00</div><div style="left:769px;top:610px;width:39px;height:27px;line-height:27px;text-align:center;padding-top:2px;color:#ff0000">胜</div><div style="left:0px;top:637px;width:907px;height:1px;background:#bdbdbd"></div><div style="left:0px;top:638px;width:907px;height:27px;background:#fff"></div><div style="left:0px;top:638px;width:74px;height:27px;background:#00a8a8"></div><div style="left:416px;top:638px;width:157px;height:27px;background:#fdf9f6"></div><div style="left:574px;top:638px;width:194px;height:27px;background:#eff8fb"></div><div style="left:0px;top:638px;width:74px;height:27px;line-height:27px;text-align:center;padding-top:2px;color:#fff">球会友谊</div><div style="left:75px;top:638px;width:75px;height:27px;line-height:27px;text-align:center;padding-top:2px;">24-06-21</div><div style="left:151px;top:638px;width:57px;height:27px;line-height:27px;text-align:center;padding-top:2px;color:#008000">法鲁尔</div><div style="left:209px;top:638px;width:89px;height:27px;line-height:27px;text-align:center;padding-top:2px;"><span style="color:#ff0000">0-1</span>(0-1)</div><div style="left:299px;top:638px;width:39px;height:27px;line-height:27px;text-align:center;padding-top:2px;">4-2</div><div style="left:339px;top:638px;width:76px;height:27px;line-height:27px;text-align:center;padding-top:2px;">查洛磨利</div><div style="left:416px;top:638px;width:42px;height:27px;line-height:27px;text-align:center;padding-top:2px;">0.96</div><div style="left:459px;top:638px;width:71px;height:27px;line-height:27px;text-align:center;padding-top:2px;color:#2255a4">半球</div><div style="left:531px;top:638px;width:42px;height:27px;line-height:27px;text-align:center;padding-top:2px;">0.80</div><div style="left:574px;top:638px;width:64px;height:27px;line-height:27px;text-align:center;padding-top:2px;">1.82</div><div style="left:639px;top:638px;width:64px;height:27px;line-height:27px;text-align:center;padding-top:2px;color:#2255a4">3.41</div><div style="left:704px;top:638px;width:64px;height:27px;line-height:27px;text-align:center;padding-top:2px;">4.03</div><div style="left:769px;top:638px;width:39px;height:27px;line-height:27px;text-align:center;padding-top:2px;color:#008000">负</div><div style="left:809px;top:638px;width:39px;height:27px;line-height:27px;text-align:center;padding-top:2px;color:#008000">输</div><div style="left:849px;top:638px;width:58px;height:27px;line-height:27px;text-align:center;padding-top:2px;color:#008000">小</div><div style="left:0px;top:665px;width:907px;height:1px;background:#bdbdbd"></div><div style="left:0px;top:666px;width:907px;height:27px;background:#f0f0f0"></div><div style="left:0px;top:666px;width:74px;height:27px;background:#339966"></div><div style="left:416px;top:666px;width:157px;height:27px;background:#fdf9f6"></div><div style="left:574px;top:666px;width:194px;height:27px;background:#eff8fb"></div><div style="left:0px;top:666px;width:74px;height:27px;line-height:27px;text-align:center;padding-top:2px;color:#fff">罗甲</div><div style="left:75px;top:666px;width:75px;height:27px;line-height:27px;text-align:center;padding-top:2px;">24-05-19</div><div style="left:151px;top:666px;width:57px;height:27px;line-height:27px;text-align:center;padding-top:2px;">克卢日</div><div style="left:209px;top:666px;width:89px;height:27px;line-height:27px;text-align:center;padding-top:2px;"><span style="color:#ff0000">5-1</span>(4-0)</div><div style="left:299px;top:666px;width:39px;height:27px;line-height:27px;text-align:center;padding-top:2px;">7-1</div><div style="left:339px;top:666px;width:76px;height:27px;line-height:27px;text-align:center;padding-top:2px;color:#008000">法鲁尔</div><div style="left:416px;top:666px;width:42px;height:27px;line-height:27px;text-align:center;padding-top:2px;">0.86</div><div style="left:459px;top:666px;width:71px;height:27px;line-height:27px;text-align:center;padding-top:2px;color:#2255a4">一/球半</div><div style="left:531px;top:666px;width:42px;height:27px;line-height:27px;text-align:center;padding-top:2px;">1.02</div><div style="left:574px;top:666px;width:64px;height:27px;line-height:27px;text-align:center;padding-top:2px;">1.39</div><div style="left:639px;top:666px;width:64px;height:27px;line-height:27px;text-align:center;padding-top:2px;color:#2255a4">4.53</div><div style="left:704px;top:666px;width:64px;height:27px;line-height:27px;text-align:center;padding-top:2px;">6.81</div><div style="left:769px;top:666px;width:39px;height:27px;line-height:27px;text-align:center;padding-top:2px;color:#008000">负</div><div style="left:809px;top:666px;width:39px;height:27px;line-height:27px;text-align:center;padding-top:2px;color:#008000">输</div><div style="left:849px;top:666px;width:58px;height:27px;line-height:27px;text-align:center;padding-top:2px;color:#ff0000">大</div><div style="left:0px;top:693px;width:907px;height:1px;background:#bdbdbd"></div><div style="left:0px;top:694px;width:907px;height:27px;background:#fff"></div><div style="left:0px;top:694px;width:74px;height:27px;background:#339966"></div><div style="left:416px;top:694px;width:157px;height:27px;background:#fdf9f6"></div><div style="left:574px;top:694px;width:194px;height:27px;background:#eff8fb"></div><div style="left:0px;top:694px;width:74px;height:27px;line-height:27px;text-align:center;padding-top:2px;color:#fff">罗甲</div><div style="left:75px;top:694px;width:75px;height:27px;line-height:27px;text-align:center;padding-top:2px;">24-05-14</div><div style="left:151px;top:694px;width:57px;height:27px;line-height:27px;text-align:center;padding-top:2px;color:#008000">法鲁尔</div><div style="left:209px;top:694px;width:89px;height:27px;line-height:27px;text-align:center;padding-top:2px;"><span style="color:#ff0000">3-3</span>(1-0)</div><div style="left:299px;top:694px;width:39px;height:27px;line-height:27px;text-align:center;padding-top:2px;">5-5</div><div style="left:339px;top:694px;width:76px;height:27px;line-height:27px;text-align:center;padding-top:2px;">CS卡拉</div><div style="left:416px;top:694px;width:42px;height:27px;line-height:27px;text-align:center;padding-top:2px;">0.82</div><div style="left:459px;top:694px;width:71px;height:27px;line-height:27px;text-align:center;padding-top:2px;color:#2255a4"><span style="color:#ff0000">*</span>平/半</div><div style="left:531px;top:694px;width:42px;height:27px;line-height:27px;text-align:center;padding-top:2px;">1.06</div><div style="left:574px;top:694px;width:64px;height:27px;line-height:27px;text-align:center;padding-top:2px;">2.60</div><div style="left:639px;top:694px;width:64px;height:27px;line-height:27px;text-align:center;padding-top:2px;color:#2255a4">3.58</div><div style="left:704px;top:694px;width:64px;height:27px;line-height:27px;text-align:center;padding-top:2px;">2.35</div><div style="left:769px;top:694px;width:39px;height:27px;line-height:27px;text-align:center;padding-top:2px;color:#0000cc">平</div><div style="left:809px;top:694px;width:39px;height:27px;line-height:27px;text-align:center;padding-top:2px;color:#ff0000">赢</div><div style="left:849px;top:694px;width:58px;height:27px;line-height:27px;text-align:center;padding-top:2px;color:#ff0000">大</div><div style="left:0px;top:721px;width:907px;height:1px;background:#bdbdbd"></div><div style="left:0px;top:722px;width:907px;height:27px;background:#f0f0f0"></div><div style="left:0px;top:722px;width:74px;height:27px;background:#339966"></div><div style="left:416px;top:722px;width:157px;height:27px;background:#fdf9f6"></div><div style="left:574px;top:722px;width:194px;height:27px;background:#eff8fb"></div><div style="left:0px;top:722px;width:74px;height:27px;line-height:27px;text-align:center;padding-top:2px;color:#fff">罗甲</div><div style="left:75px;top:722px;width:75px;height:27px;line-height:27px;text-align:center;padding-top:2px;">24-05-04</div><div style="left:151px;top:722px;width:57px;height:27px;line-height:27px;text-align:center;padding-top:2px;color:#008000">法鲁尔</div><div style="left:209px;top:722px;width:89px;height:27px;line-height:27px;text-align:center;padding-top:2px;"><span style="color:#ff0000">1-4</span>(0-3)</div><div style="left:299px;top:722px;width:39px;height:27px;line-height:27px;text-align:center;padding-top:2px;">4-0</div><div style="left:339px;top:722px;width:76px;height:27px;line-height:27px;text-align:center;padding-top:2px;">圣格奥尔</div><div style="left:416px;top:722px;width:42px;height:27px;line-height:27px;text-align:center;padding-top:2px;">0.96</div><div style="left:459px;top:722px;width:71px;height:27px;line-height:27px;text-align:center;padding-top:2px;color:#2255a4">半/一</div><div style="left:531px;top:722px;width:42px;height:27px;line-height:27px;text-align:center;padding-top:2px;">0.92</div><div style="left:574px;top:722px;width:64px;height:27px;line-height:27px;text-align:center;padding-top:2px;">1.64</div><div style="left:639px;top:722px;width:64px;height:27px;line-height:27px;text-align:center;padding-top:2px;color:#2255a4">3.70</div><div style="left:704px;top:722px;width:64px;height:27px;line-height:27px;text-align:center;padding-top:2px;">4.78</div><div style="left:769px;top:722px;width:39px;height:27px;line-height:27px;text-align:center;padding-top:2px;color:#008000">负</div><div style="left:809px;top:722px;width:39px;height:27px;line-height:27px;text-align:center;padding-top:2px;color:#008000">输</div><div style="left:849px;top:722px;width:58px;height:27px;line-height:27px;text-align:center;padding-top:2px;color:#ff0000">大</div><div style="left:0px;top:749px;width:907px;height:1px;background:#bdbdbd"></div><div style="left:74px;top:429px;width:1px;height:321px;background:#bdbdbd"></div><div style="left:150px;top:429px;width:1px;height:321px;background:#bdbdbd"></div><div style="left:208px;top:429px;width:1px;height:321px;background:#bdbdbd"></div><div style="left:298px;top:429px;width:1px;height:321px;background:#bdbdbd"></div><div style="left:338px;top:429px;width:1px;height:321px;background:#bdbdbd"></div><div style="left:415px;top:429px;width:1px;height:321px;background:#bdbdbd"></div><div style="left:458px;top:451px;width:1px;height:299px;background:#bdbdbd"></div><div style="left:530px;top:451px;width:1px;height:299px;background:#bdbdbd"></div><div style="left:573px;top:429px;width:1px;height:321px;background:#bdbdbd"></div><div style="left:638px;top:451px;width:1px;height:299px;background:#bdbdbd"></div><div style="left:703px;top:451px;width:1px;height:299px;background:#bdbdbd"></div><div style="left:768px;top:429px;width:1px;height:321px;background:#bdbdbd"></div><div style="left:808px;top:451px;width:1px;height:299px;background:#bdbdbd"></div><div style="left:848px;top:451px;width:1px;height:299px;background:#bdbdbd"></div><div style="left:0;top:750px;width:907px;height:27px;line-height:27px;text-align:center;background:#fff"><span style="letter-spacing:0.15px">近<span style="color:#ff0000">10</span>场,胜3平1负6, 胜率:<span style="background:#008000;color:#fff;padding:2px 5px 2px 6px">30%</span> 赢率:<span style="color:#2222ee">33.3%</span> 大:<span style="color:#2222ee">66.6%</span> 单率:<span style="color:#2222ee">60%</span></span></div><div style="left:382px;top:5px;height:16px;line-height:16px;font-size:14px;font-weight:bold;color:#fff">近期战绩</div><div class="rd" style="left:437px;top:5px"></div><div style="left:455px;top:6px;line-height:15px;font-size:12px;color:#fff">竖版</div><div class="rd on" style="left:483px;top:6px"></div><div style="left:500px;top:6px;line-height:15px;font-size:12px;color:#fff">横版</div></body></html>
